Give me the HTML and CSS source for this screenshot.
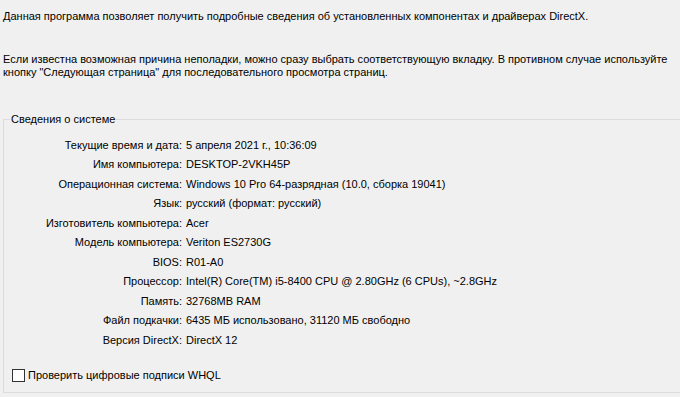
FILE: index.html
```html
<!DOCTYPE html>
<html lang="ru">
<head>
<meta charset="utf-8">
<link rel="stylesheet" href="styles.css">
</head>
<body>
<div class="page">
  <p class="intro first">Данная программа позволяет получить подробные сведения об установленных компонентах и драйверах DirectX.</p>
  <p class="intro second">Если известна возможная причина неполадки, можно сразу выбрать соответствующую вкладку. В противном случае используйте<br>кнопку "Следующая страница" для последовательного просмотра страниц.</p>
  <fieldset class="group">
    <legend class="legend">Сведения о системе</legend>
    <div class="info">
      <div class="label">Текущие время и дата:</div><div class="value">5 апреля 2021 г., 10:36:09</div>
      <div class="label">Имя компьютера:</div><div class="value">DESKTOP-2VKH45P</div>
      <div class="label">Операционная система:</div><div class="value">Windows 10 Pro 64-разрядная (10.0, сборка 19041)</div>
      <div class="label">Язык:</div><div class="value">русский (формат: русский)</div>
      <div class="label">Изготовитель компьютера:</div><div class="value">Acer</div>
      <div class="label">Модель компьютера:</div><div class="value">Veriton ES2730G</div>
      <div class="label">BIOS:</div><div class="value">R01-A0</div>
      <div class="label">Процессор:</div><div class="value">Intel(R) Core(TM) i5-8400 CPU @ 2.80GHz (6 CPUs), ~2.8GHz</div>
      <div class="label">Память:</div><div class="value">32768MB RAM</div>
      <div class="label">Файл подкачки:</div><div class="value">6435 МБ использовано, 31120 МБ свободно</div>
      <div class="label">Версия DirectX:</div><div class="value">DirectX 12</div>
    </div>
    <label class="check"><span class="box"></span>Проверить цифровые подписи WHQL</label>
  </fieldset>
</div>
</body>
</html>
```
FILE: styles.css
```css
html, body {
  margin: 0;
  padding: 0;
  background: #f0f0f0;
  overflow: hidden;
}
.page {
  width: 680px;
  height: 397px;
  padding-left: 3px;
  box-sizing: border-box;
  font-family: "Liberation Sans", Arial, sans-serif;
  font-size: 11px;
  color: #000;
  overflow: hidden;
}
.intro {
  margin: 0;
  line-height: 13px;
  white-space: nowrap;
}
.first {
  padding-top: 10px;
}
.second {
  padding-top: 30px;
}
.group {
  margin: 34px 0 0 0;
  width: 720px;
  height: 280px;
  box-sizing: border-box;
  border: 1px solid #dcdcdc;
  padding: 0;
}
.legend {
  margin-left: 6px;
  padding: 0 1px;
  line-height: 13px;
}
.info {
  display: grid;
  grid-template-columns: 178px auto;
  column-gap: 4px;
  grid-auto-rows: 19.5px;
  align-items: center;
  margin-top: 9px;
}
.label {
  text-align: right;
  white-space: nowrap;
}
.value {
  white-space: nowrap;
}
.check {
  display: flex;
  align-items: center;
  margin: 19px 0 0 8px;
}
.box {
  width: 11px;
  height: 11px;
  border: 1px solid #333;
  background: #fff;
  margin-right: 3px;
}
```
